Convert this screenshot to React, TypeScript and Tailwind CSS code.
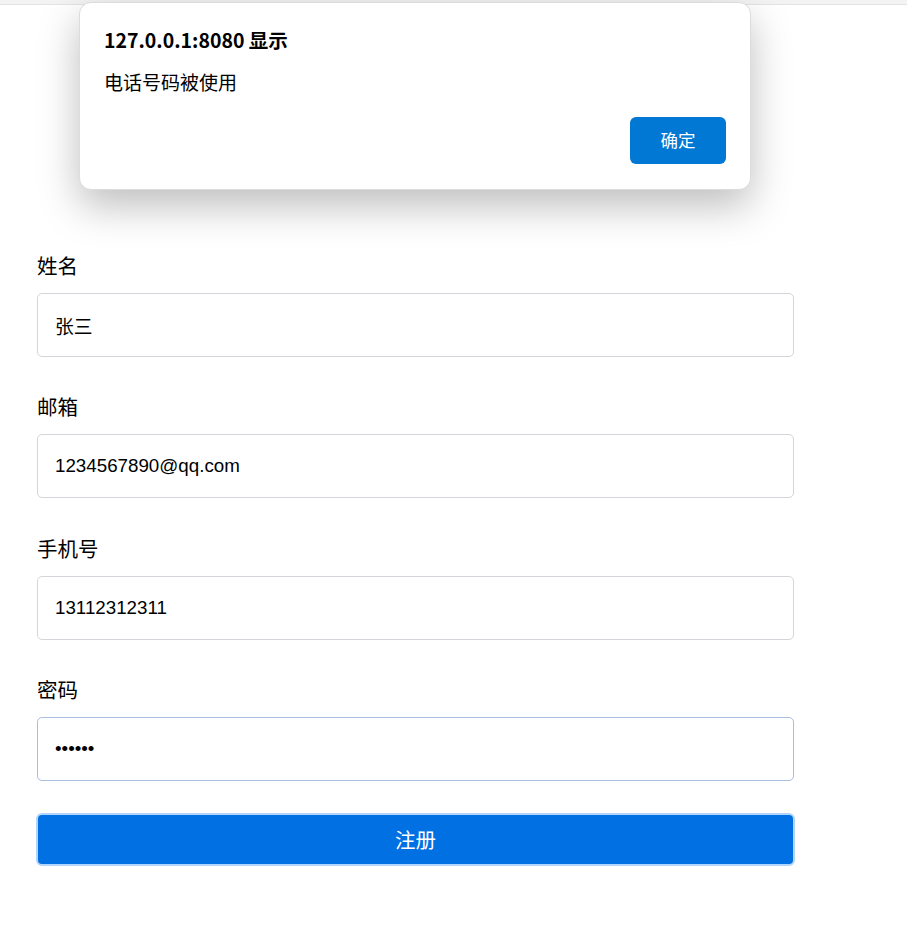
import React, { useState } from "react";

const cjk = "font-['Microsoft_YaHei','Noto_Sans_CJK_SC','Noto_Sans',sans-serif]";
const latin = "font-['Liberation_Sans','Noto_Sans_CJK_SC',sans-serif]";

const Field: React.FC<{ label: string; value: string; cjkValue?: boolean }> = ({ label, value, cjkValue }) => (
  <div className="mb-[34.4px]">
    <label className={`block text-[20.5px] leading-[30px] text-black ${cjk}`}>{label}</label>
    <input
      type="text"
      defaultValue={value}
      className={`mt-[13px] block h-[64px] w-full rounded-[5px] border border-[#d3d5da] bg-white px-[17px] text-[18.75px] text-black outline-none ${
        cjkValue ? cjk : latin
      }`}
    />
  </div>
);

const App: React.FC = () => {
  const [open, setOpen] = useState(true);

  return (
    <div className="relative min-h-[943px] w-full bg-white">
      {/* top strip */}
      <div className="h-[5px] w-full border-b border-[#e4e4e4] bg-[#f3f3f3]" />

      {/* Register form */}
      <form className="w-[757px] ml-[37px] pt-[245px]" onSubmit={(e) => e.preventDefault()}>
        <Field label="姓名" value="张三" cjkValue />
        <Field label="邮箱" value="1234567890@qq.com" />
        <Field label="手机号" value="13112312311" />
        <div className="mb-[32px]">
          <label className={`block text-[20.5px] leading-[30px] text-black ${cjk}`}>密码</label>
          <input
            type="password"
            defaultValue="123456"
            className={`mt-[13px] block h-[64px] w-full rounded-[5px] border border-[#a9bde0] bg-white px-[17px] text-[18.75px] text-black outline-none ${latin}`}
          />
        </div>
        <button
          type="submit"
          className={`block h-[53px] w-[759px] -ml-px rounded-[6px] border-2 border-[#b3d4fb] bg-[#0070e3] text-[20.5px] text-white ${cjk}`}
        >
          注册
        </button>
      </form>

      {/* alert dialog */}
      {open && (
        <div className="absolute left-[79px] top-[2px] w-[672px] h-[188px] rounded-[12px] border border-[#dcdcdc] bg-white px-[24px] pt-[22px] shadow-[0_16px_40px_rgba(0,0,0,0.26)]">
          <div className={`text-[19.5px] leading-[30px] font-bold text-black ${cjk}`}>127.0.0.1:8080 显示</div>
          <div className={`mt-[13px] text-[19px] leading-[28px] text-black ${cjk}`}>电话号码被使用</div>
          <div className="mt-[21px] flex justify-end">
            <button
              onClick={() => setOpen(false)}
              className={`h-[47px] w-[96px] rounded-[6px] bg-[#0078d4] text-[17.5px] text-white ${cjk}`}
            >
              确定
            </button>
          </div>
        </div>
      )}
    </div>
  );
};

export default App;
